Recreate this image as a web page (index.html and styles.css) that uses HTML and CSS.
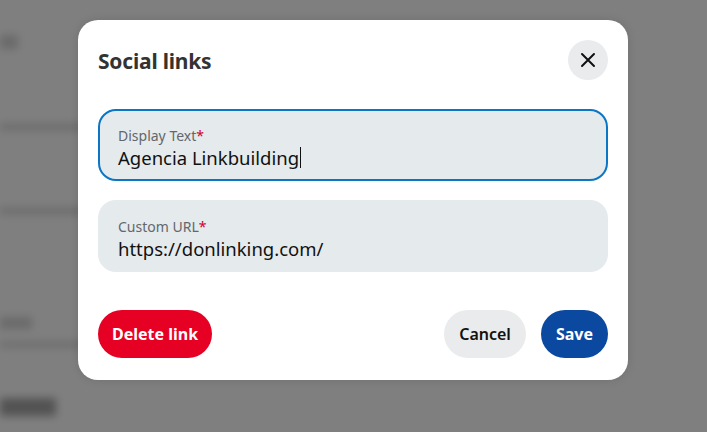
FILE: index.html
```html
<!DOCTYPE html>
<html lang="en">
    <head>
        <meta charset="UTF-8" />
        <meta name="viewport" content="width=device-width, initial-scale=1.0" />
        <title>Social links</title>
        <link rel="stylesheet" href="styles.css">
    </head>
    <body>
        <!-- page behind the overlay, blurred -->
        <div class="backdrop">
            <div class="bg-row bg-top"><span class="bg-word"></span></div>
            <div class="bg-line"></div>
            <div class="bg-line second"></div>
            <div class="bg-row bg-small"><span class="bg-word short"></span></div>
            <div class="bg-line thin"></div>
            <div class="bg-row bg-head"><span class="bg-word bold"></span></div>
        </div>

        <div class="overlay">
            <div class="modal">
                <div class="modal-head">
                    <h2>Social links</h2>
                    <button class="close" type="button">
                        <svg width="16" height="16" viewBox="0 0 16 16">
                            <path d="M2 2 L14 14 M14 2 L2 14" stroke="#111" stroke-width="2" stroke-linecap="round" fill="none" />
                        </svg>
                    </button>
                </div>

                <div class="field active">
                    <span class="label">Display Text<em>*</em></span>
                    <span class="value">Agencia Linkbuilding<i class="caret"></i></span>
                </div>
                <div class="field">
                    <span class="label">Custom URL<em>*</em></span>
                    <span class="value">https://donlinking.com/</span>
                </div>

                <div class="modal-foot">
                    <button class="btn red" type="button">Delete link</button>
                    <div class="right">
                        <button class="btn grey" type="button">Cancel</button>
                        <button class="btn blue" type="button">Save</button>
                    </div>
                </div>
            </div>
        </div>
    </body>
</html>
```

FILE: styles.css
```css
* {
    margin: 0px;
    padding: 0px;
    box-sizing: border-box;
}
html,
body {
    width: 707px;
    height: 432px;
    overflow: hidden;
}
body {
    font-family: "Noto Sans", "Open Sans", sans-serif;
    background-color: #ffffff;
    position: relative;
}

/* blurred page */
.backdrop {
    filter: blur(4px);
    padding-top: 32px;
}
.bg-row {
    height: 30px;
}
.bg-word {
    display: inline-block;
    width: 18px;
    height: 14px;
    background-color: #d4d4d4;
}
.bg-line {
    height: 6px;
    width: 100px;
    background-color: #d2d2d2;
    margin-top: 62px;
}
.bg-line.second {
    margin-top: 78px;
}
.bg-line.thin {
    margin-top: 0px;
    height: 5px;
}
.bg-small {
    margin-top: 98px;
}
.bg-word.short {
    width: 32px;
    height: 12px;
}
.bg-head {
    margin-top: 51px;
}
.bg-word.bold {
    width: 56px;
    height: 18px;
    background-color: #a6a6a6;
}

.overlay {
    position: absolute;
    top: 0px;
    left: 0px;
    width: 707px;
    height: 432px;
    background-color: rgba(0, 0, 0, 0.5);
    padding-top: 20px;
    padding-left: 78px;
}

.modal {
    width: 550px;
    height: 360px;
    background-color: #ffffff;
    border-radius: 20px;
    padding: 20px 20px 22px;
    display: flex;
    flex-direction: column;
    box-shadow: 0 0 10px rgba(0, 0, 0, 0.12);
}
.modal-head {
    height: 40px;
    display: flex;
    align-items: center;
    justify-content: space-between;
    margin-bottom: 29px;
}
.modal-head h2 {
    font-size: 21px;
    font-weight: 700;
    color: #333333;
    letter-spacing: -0.2px;
    padding-top: 2px;
}
.close {
    width: 40px;
    height: 40px;
    border: none;
    border-radius: 50%;
    background-color: #e9ebed;
    display: flex;
    align-items: center;
    justify-content: center;
}

.field {
    height: 72px;
    border: 2px solid transparent;
    border-radius: 18px;
    background-color: #e5eaed;
    padding: 15px 18px 0px;
    display: flex;
    flex-direction: column;
    margin-bottom: 19px;
}
.field.active {
    border-color: #0b76c5;
}
.label {
    font-size: 14px;
    line-height: 19px;
    color: #62676b;
}
.label em {
    font-style: normal;
    color: #cc0033;
}
.value {
    font-size: 18.5px;
    line-height: 25px;
    color: #111111;
    display: flex;
    align-items: center;
}
.caret {
    display: inline-block;
    width: 1px;
    height: 21px;
    background-color: #111111;
    margin-left: 1px;
}

.modal-foot {
    margin-top: auto;
    display: flex;
    justify-content: space-between;
}
.right {
    display: flex;
    gap: 15px;
}
.btn {
    height: 48px;
    border: none;
    border-radius: 24px;
    font-family: "Noto Sans", "Open Sans", sans-serif;
    font-size: 16px;
    font-weight: 700;
    padding: 0px 15px;
}
.red {
    background-color: #e60023;
    color: #ffffff;
    padding: 0px 14px;
}
.grey {
    background-color: #e9ebed;
    color: #111111;
    font-weight: 600;
}
.blue {
    background-color: #0b48a0;
    color: #ffffff;
}
```
